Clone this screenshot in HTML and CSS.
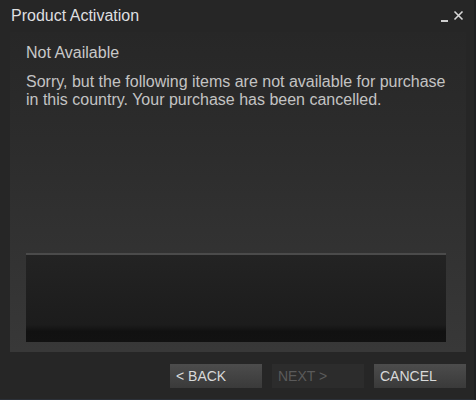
FILE: index.html
```html
<!DOCTYPE html>
<html>
<head>
<meta charset="utf-8">
<link rel="stylesheet" href="styles.css">
</head>
<body>
<div class="window">
  <div class="titlebar">
    <span class="title">Product Activation</span>
    <div class="controls">
      <span class="min"></span>
      <svg class="close" width="11" height="11" viewBox="0 0 11 11"><path d="M1.5 1.5 L9.5 9.5 M9.5 1.5 L1.5 9.5" stroke="#d8d8d8" stroke-width="1.6" fill="none"/></svg>
    </div>
  </div>
  <div class="panel">
    <div class="heading">Not Available</div>
    <p class="message">Sorry, but the following items are not available for purchase in this country. Your purchase has been cancelled.</p>
    <div class="listbox"></div>
  </div>
  <div class="buttons">
    <button class="btn">&lt; BACK</button>
    <button class="btn disabled">NEXT &gt;</button>
    <button class="btn">CANCEL</button>
  </div>
</div>
</body>
</html>
```
FILE: styles.css
```css
html, body {
  margin: 0;
  padding: 0;
  background: #262626;
}
.window {
  width: 476px;
  height: 400px;
  box-sizing: border-box;
  background: #262626;
  font-family: "Liberation Sans", Arial, sans-serif;
  border-right: 2px solid #1f2022;
  border-bottom: 1px solid #2b3038;
  display: flex;
  flex-direction: column;
}
.titlebar {
  height: 32px;
  display: flex;
  align-items: flex-start;
  justify-content: space-between;
  padding: 0 10px 0 11px;
}
.title {
  color: #dedfe0;
  font-size: 16px;
  line-height: 16px;
  margin-top: 8px;
}
.controls {
  display: flex;
  align-items: flex-start;
  gap: 5px;
  margin-top: 10px;
}
.min {
  width: 7px;
  height: 2px;
  background: #cfcfcf;
  margin-top: 10px;
}
.close {
  display: block;
}
.panel {
  margin: 0 8px 0 10px;
  height: 320px;
  box-sizing: border-box;
  background: linear-gradient(to bottom, #272727 0%, #2d2d2d 40%, #383838 100%);
  padding: 12px 20px 10px 16px;
  display: flex;
  flex-direction: column;
}
.heading {
  color: #c8c8c8;
  font-size: 16px;
  line-height: 18px;
}
.message {
  margin: 11px 0 0 0;
  color: #c3c3c3;
  font-size: 16px;
  line-height: 18px;
}
.listbox {
  margin-top: auto;
  height: 89px;
  box-sizing: border-box;
  border-top: 2px solid #4b4b4b;
  background: linear-gradient(to bottom, #232323 0%, #1c1c1c 80%, #111111 88%, #121212 100%);
}
.buttons {
  display: flex;
  justify-content: flex-end;
  gap: 10px;
  padding: 12px 8px 0 0;
}
.btn {
  width: 92px;
  height: 24px;
  border: none;
  padding: 0 0 0 6px;
  text-align: left;
  font-family: "Liberation Sans", Arial, sans-serif;
  font-size: 14px;
  color: #d8d9da;
  background: linear-gradient(to bottom, #4c4c4c 0%, #3a3a3a 100%);
}
.btn.disabled {
  color: #5a5a5a;
  background: #2c2c2c;
}
```
